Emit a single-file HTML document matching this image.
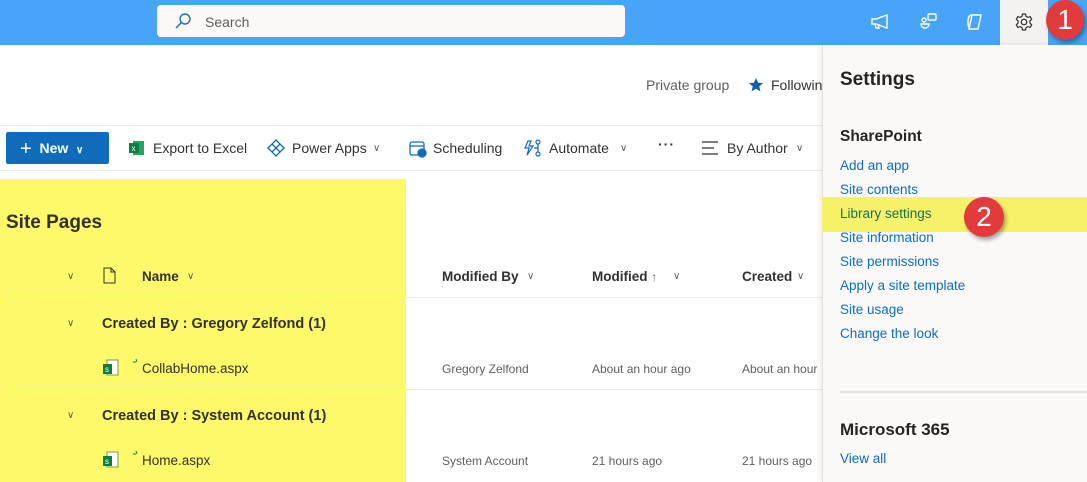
<!DOCTYPE html>
<html><head><meta charset="utf-8"><style>
*{margin:0;padding:0;box-sizing:border-box}
body{width:1087px;height:482px;overflow:hidden;background:#fff;font-family:"Liberation Sans",sans-serif;color:#323130;position:relative}
.a{position:absolute;white-space:nowrap}
.top{left:0;top:0;width:1087px;height:45px;background:#48a4f6}
.search{left:157px;top:5px;width:468px;height:32px;background:#faf9f8;border-radius:4px}
.y{background:#fdf96b}
.cmd{font-size:14px;color:#323130}
.hd{font-size:13.5px;font-weight:bold;color:#323130}
.sm{font-size:12px;color:#605e5c}
.lk{font-size:13.5px;color:#0f6cbd;left:840px}
.chev{font-size:10px;color:#605e5c}
</style></head><body>
<div class="a top"></div>
<div class="a search"></div>
<svg class="a" style="left:174px;top:12px" width="18" height="18" viewBox="0 0 18 18"><circle cx="11" cy="7" r="5" fill="none" stroke="#1a6fc9" stroke-width="1.4"/><path d="M7.5 10.5L2 16" stroke="#1a6fc9" stroke-width="1.5"/></svg>
<div class="a" style="left:205px;top:14px;font-size:14px;color:#605e5c">Search</div>
<!-- top icons -->
<svg class="a" style="left:869px;top:12px" width="22" height="20" viewBox="0 0 22 20" fill="none" stroke="#fff" stroke-width="1.4"><path d="M3 7h4l11-4v13l-11-4H3z"/><path d="M6 12l1 4h3l-1-4"/></svg>
<svg class="a" style="left:918px;top:11px" width="22" height="22" viewBox="0 0 22 22" fill="none" stroke="#fff" stroke-width="1.4"><rect x="10" y="3" width="8" height="6" rx="1"/><circle cx="6" cy="9" r="2"/><path d="M3 13h8a4 4 0 0 1-8 0z"/></svg>
<svg class="a" style="left:964px;top:11px" width="22" height="22" viewBox="0 0 22 22" fill="none" stroke="#fff" stroke-width="1.4"><path d="M8 4h9l-3 14H5z"/><path d="M8 4C5 4 4 7 4 11s1 7 3 7"/></svg>
<div class="a" style="left:1000px;top:0;width:48px;height:45px;background:#f3f2f1"></div>
<svg class="a" style="left:1014px;top:12px" width="20" height="20" viewBox="0 0 20 20" fill="none" stroke="#323130" stroke-width="1.2"><circle cx="10" cy="10" r="2.8"/><path d="M8.5 2h3l.5 2.3 2 1.1 2.2-.8 1.5 2.6-1.7 1.6v2.4l1.7 1.6-1.5 2.6-2.2-.8-2 1.1-.5 2.3h-3l-.5-2.3-2-1.1-2.2.8-1.5-2.6 1.7-1.6V8.8L2.3 7.2l1.5-2.6 2.2.8 2-1.1z"/></svg>
<!-- badge 1 -->
<div class="a" style="left:1046px;top:0;width:38px;height:40px;border-radius:50%;background:#e23b3b;box-shadow:2px 3px 4px rgba(0,0,0,.35);color:#fff;font-size:28px;text-align:center;line-height:40px">1</div>
<!-- header right -->
<div class="a" style="left:646px;top:77px;font-size:14px;color:#605e5c">Private group</div>
<svg class="a" style="left:748px;top:77px" width="16" height="16" viewBox="0 0 16 16"><path d="M8 1l2.1 4.6 5 .5-3.8 3.3 1.1 5-4.4-2.6-4.4 2.6 1.1-5L.9 6.1l5-.5z" fill="#0f5fb0"/></svg>
<div class="a" style="left:771px;top:77px;font-size:14px;color:#323130">Followin</div>
<!-- command bar -->
<div class="a" style="left:0;top:125px;width:822px;height:1px;background:#edebe9"></div>
<div class="a" style="left:0;top:170px;width:822px;height:1px;background:#edebe9"></div>
<div class="a" style="left:6px;top:132px;width:103px;height:32px;background:#0f6cbd;border-radius:2px;color:#fff;font-size:14px;font-weight:bold;line-height:32px;padding-left:14px"><span style="font-size:20px;font-weight:normal;vertical-align:-2px">+</span>&nbsp; New &nbsp;<span style="font-size:10px">&#x2228;</span></div>
<svg class="a" style="left:129px;top:140px" width="16" height="16" viewBox="0 0 16 16"><rect x="4" y="1" width="11" height="14" fill="#21a366"/><rect x="0" y="3" width="10" height="10" fill="#107c41"/><text x="2.5" y="11" font-size="8" fill="#fff" font-family="Liberation Sans">x</text></svg>
<div class="a cmd" style="left:153px;top:140px">Export to Excel</div>
<svg class="a" style="left:267px;top:139px" width="18" height="18" viewBox="0 0 18 18" fill="none" stroke="#0f6cbd" stroke-width="1.3"><path d="M9 1l8 8-8 8-8-8z"/><path d="M5 5l8 8M13 5l-8 8"/></svg>
<div class="a cmd" style="left:292px;top:140px">Power Apps</div>
<div class="a chev" style="left:373px;top:143px">&#x2228;</div>
<svg class="a" style="left:409px;top:140px" width="18" height="18" viewBox="0 0 18 18" fill="none" stroke="#0f6cbd" stroke-width="1.3"><rect x="1" y="2" width="14" height="13" rx="2"/><path d="M1 6h14"/><circle cx="13" cy="13" r="4" fill="#0f6cbd"/></svg>
<div class="a cmd" style="left:433px;top:140px">Scheduling</div>
<svg class="a" style="left:524px;top:139px" width="18" height="18" viewBox="0 0 18 18" fill="none" stroke="#0f6cbd" stroke-width="1.2"><path d="M4 2l-3 7h4l-2 7 6-9H5l2-5z"/><circle cx="14" cy="3" r="2"/><circle cx="14" cy="15" r="2"/><path d="M14 5v8M10 9h4"/></svg>
<div class="a cmd" style="left:549px;top:140px">Automate</div>
<div class="a chev" style="left:620px;top:143px">&#x2228;</div>
<div class="a cmd" style="left:658px;top:136px;font-weight:bold;letter-spacing:1px">···</div>
<svg class="a" style="left:702px;top:140px" width="18" height="16" viewBox="0 0 18 16" stroke="#323130" stroke-width="1.2"><path d="M0 2h16M0 8h12M0 14h16"/></svg>
<div class="a cmd" style="left:727px;top:140px">By Author</div>
<div class="a chev" style="left:796px;top:143px">&#x2228;</div>
<!-- yellow -->
<div class="a y" style="left:0;top:179px;width:406px;height:303px"></div>
<div class="a" style="left:6px;top:212px;font-size:19px;font-weight:bold;color:#323130">Site Pages</div>
<div class="a chev" style="left:67px;top:271px">&#x2228;</div>
<svg class="a" style="left:103px;top:267px" width="13" height="17" viewBox="0 0 13 17" fill="none" stroke="#323130" stroke-width="1"><path d="M1 1h7l4 4v11H1z"/><path d="M8 1v4h4"/></svg>
<div class="a hd" style="left:142px;top:269px">Name</div>
<div class="a chev" style="left:187px;top:271px">&#x2228;</div>
<div class="a hd" style="left:442px;top:269px">Modified By</div>
<div class="a chev" style="left:527px;top:271px">&#x2228;</div>
<div class="a hd" style="left:592px;top:269px">Modified <span style="font-weight:normal;font-size:12px;color:#605e5c">&#x2191;</span></div>
<div class="a chev" style="left:673px;top:271px">&#x2228;</div>
<div class="a hd" style="left:742px;top:269px">Created</div>
<div class="a chev" style="left:797px;top:271px">&#x2228;</div>
<div class="a" style="left:6px;top:297px;width:816px;height:1px;background:#edebe9"></div>
<div class="a" style="left:6px;top:389px;width:816px;height:1px;background:#edebe9"></div>
<div class="a chev" style="left:67px;top:318px">&#x2228;</div>
<div class="a hd" style="left:102px;top:316px;font-size:14.5px">Created By : Gregory Zelfond (1)</div>
<div class="a chev" style="left:67px;top:410px">&#x2228;</div>
<div class="a hd" style="left:102px;top:408px;font-size:14.5px">Created By : System Account (1)</div>
<svg class="a" style="left:103px;top:356px" width="40" height="22" viewBox="0 0 40 22"><rect x="4" y="4" width="11" height="15" fill="#fff" stroke="#7a9d3c"/><rect x="0" y="8" width="9" height="10" fill="#107c41"/><text x="2" y="16" font-size="8" fill="#fff" font-family="Liberation Sans">s</text><path d="M33 3l1 3M30 6h3" stroke="#107c41"/></svg>
<div class="a" style="left:142px;top:361px;font-size:13.5px">CollabHome.aspx</div>
<svg class="a" style="left:103px;top:448px" width="40" height="22" viewBox="0 0 40 22"><rect x="4" y="4" width="11" height="15" fill="#fff" stroke="#7a9d3c"/><rect x="0" y="8" width="9" height="10" fill="#107c41"/><text x="2" y="16" font-size="8" fill="#fff" font-family="Liberation Sans">s</text><path d="M33 3l1 3M30 6h3" stroke="#107c41"/></svg>
<div class="a" style="left:142px;top:453px;font-size:13.5px">Home.aspx</div>
<div class="a sm" style="left:442px;top:362px">Gregory Zelfond</div>
<div class="a sm" style="left:592px;top:362px">About an hour ago</div>
<div class="a sm" style="left:742px;top:362px">About an hour</div>
<div class="a sm" style="left:442px;top:454px">System Account</div>
<div class="a sm" style="left:592px;top:454px">21 hours ago</div>
<div class="a sm" style="left:742px;top:454px">21 hours ago</div>
<!-- settings panel -->
<div class="a" style="left:822px;top:45px;width:265px;height:437px;background:#faf9f8;border-left:1px solid #e1dfdd;box-shadow:-2px 0 6px rgba(0,0,0,.08)"></div>
<div class="a" style="left:840px;top:69px;font-size:19px;font-weight:bold;color:#252423">Settings</div>
<div class="a" style="left:840px;top:128px;font-size:15.5px;font-weight:bold;color:#252423">SharePoint</div>
<div class="a" style="left:822px;top:197px;width:265px;height:35px;background:#f5f26a"></div>
<div class="a lk" style="top:158px">Add an app</div>
<div class="a lk" style="top:182px">Site contents</div>
<div class="a lk" style="top:206px;color:#1f6e5a">Library settings</div>
<div class="a lk" style="top:230px">Site information</div>
<div class="a lk" style="top:254px">Site permissions</div>
<div class="a lk" style="top:278px">Apply a site template</div>
<div class="a lk" style="top:302px">Site usage</div>
<div class="a lk" style="top:326px">Change the look</div>
<div class="a" style="left:964px;top:197px;width:40px;height:40px;border-radius:50%;background:#e23b3b;box-shadow:2px 3px 4px rgba(0,0,0,.35);color:#fff;font-size:28px;text-align:center;line-height:40px">2</div>
<div class="a" style="left:840px;top:391px;width:247px;height:2px;background:#e1dfdd"></div>
<div class="a" style="left:840px;top:420px;font-size:17px;font-weight:bold;color:#252423">Microsoft 365</div>
<div class="a lk" style="top:451px">View all</div>
</body></html>
